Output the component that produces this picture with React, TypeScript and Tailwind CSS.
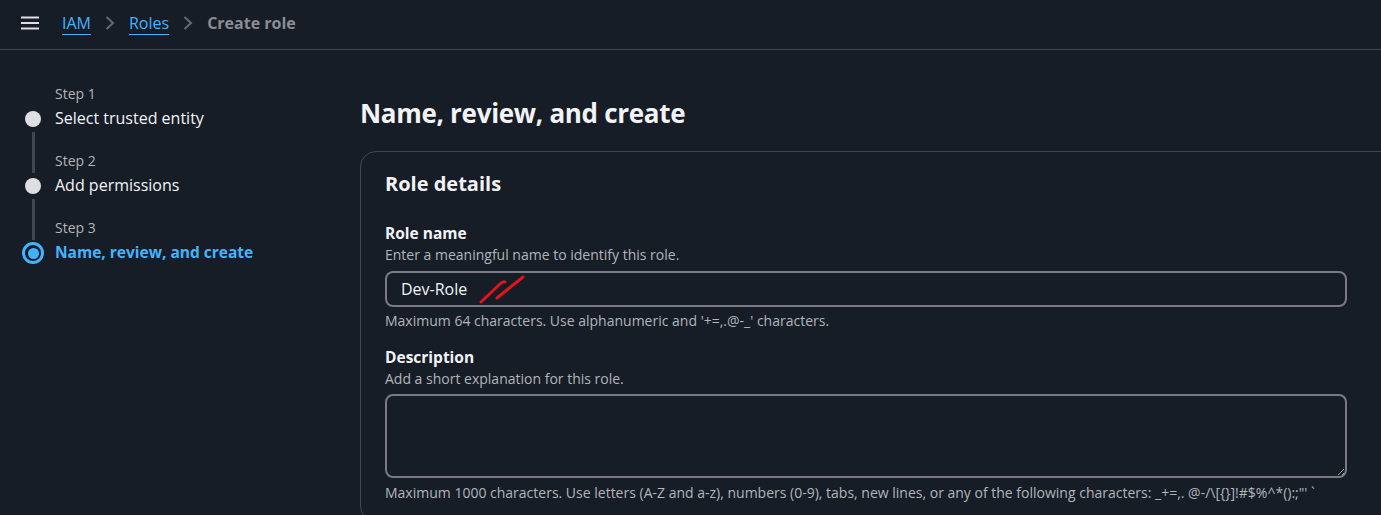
import React from "react";

const font = { fontFamily: '"Open Sans", "Noto Sans", Arial, sans-serif' };

function Chevron() {
  return (
    <svg width="12" height="16" viewBox="0 0 12 16" className="mx-[13px]" fill="none">
      <path d="M2.5 2 L9 8 L2.5 14" stroke="#656871" strokeWidth="2" />
    </svg>
  );
}

type Step = { label: string; title: string; active?: boolean };

const steps: Step[] = [
  { label: "Step 1", title: "Select trusted entity" },
  { label: "Step 2", title: "Add permissions" },
  { label: "Step 3", title: "Name, review, and create", active: true },
];

function StepItem({ step, first, last }: { step: Step; first: boolean; last: boolean }) {
  return (
    <div className="flex">
      <div className="flex w-[22px] flex-col items-center">
        <div className="flex h-[22px] w-full justify-center">
          {!first && <div className="mb-[2px] w-[3px] bg-[#424650]" />}
        </div>
        {step.active ? (
          <div className="flex h-[22px] w-[22px] items-center justify-center rounded-full border-[3px] border-[#42b4ff]">
            <div className="h-[11px] w-[11px] rounded-full bg-[#42b4ff]" />
          </div>
        ) : (
          <div className="my-[3px] h-[16px] w-[16px] rounded-full bg-[#dedee3]" />
        )}
        {!last && <div className="mt-[2px] w-[3px] flex-1 bg-[#424650]" />}
      </div>
      <div className={`ml-[11px] flex flex-col ${last ? "" : "pb-[25px]"}`}>
        <div className="text-[14px] leading-[16px] text-[#b4b4bb]">{step.label}</div>
        <div
          className={`mt-[6px] leading-[20px] ${
            step.active ? "text-[15.5px] font-bold text-[#42b4ff]" : "text-[16px] text-[#f3f3f7]"
          }`}
        >
          {step.title}
        </div>
      </div>
    </div>
  );
}

export default function App() {
  return (
    <div
      style={font}
      className="h-[515px] w-[1381px] overflow-hidden bg-[#161d26] text-[#dedee3]"
    >
      <header className="flex h-[50px] items-center border-b border-[#424650] pb-[4px] pl-[21px]">
        <svg width="18" height="14" viewBox="0 0 18 14" fill="none">
          <path d="M0 1.5H18M0 7H18M0 12.5H18" stroke="#dedee3" strokeWidth="2" />
        </svg>
        <div className="ml-[23px] flex items-center text-[16px] leading-[20px]">
          <span className="text-[#42b4ff] underline underline-offset-[5px]">IAM</span>
          <Chevron />
          <span className="text-[#42b4ff] underline underline-offset-[5px]">Roles</span>
          <Chevron />
          <span className="font-bold text-[#8c8c94]">Create role</span>
        </div>
      </header>
      <div className="flex">
        <nav className="w-[360px] shrink-0 pl-[22px] pt-[36px]">
          {steps.map((s, i) => (
            <StepItem key={s.label} step={s} first={i === 0} last={i === steps.length - 1} />
          ))}
        </nav>
        <main className="flex-1 pt-[45px]">
          <h1 className="text-[26px] font-bold leading-[36px] tracking-[-0.3px] text-[#f3f3f7]">
            Name, review, and create
          </h1>
          <section className="mt-[20px] w-[1060px] rounded-[16px] border border-[#424650] px-[24px] pt-[20px]">
            <h2 className="text-[20px] font-bold leading-[24px] text-[#f3f3f7]">Role details</h2>
            <div className="mt-[27px] text-[15.5px] font-bold leading-[20px] text-[#f3f3f7]">Role name</div>
            <div className="mt-[4px] text-[14px] leading-[16px] text-[#b4b4bb]">
              Enter a meaningful name to identify this role.
            </div>
            <div className="relative mt-[8px] w-[962px]">
              <div className="flex h-[36px] items-center rounded-[8px] border-2 border-[#7a7a84] px-[14px] text-[16px] text-[#f3f3f7]">
                Dev-Role
              </div>
              <svg
                className="absolute left-0 top-0"
                width="160"
                height="36"
                viewBox="0 0 160 36"
                fill="none"
              >
                <path d="M96 31 L115 13 Q118 10 120 11" stroke="#e0141c" strokeWidth="3" strokeLinecap="round" />
                <path d="M112 27 L138 6" stroke="#e0141c" strokeWidth="3" strokeLinecap="round" />
              </svg>
            </div>
            <div className="mt-[6px] text-[14px] leading-[16px] text-[#b4b4bb]">
              Maximum 64 characters. Use alphanumeric and '+=,.@-_' characters.
            </div>
            <div className="mt-[18px] text-[15.5px] font-bold leading-[20px] text-[#f3f3f7]">Description</div>
            <div className="mt-[4px] text-[14px] leading-[16px] text-[#b4b4bb]">
              Add a short explanation for this role.
            </div>
            <textarea
              className="mt-[7px] block h-[84px] w-[962px] rounded-[8px] border-2 border-[#7a7a84] bg-transparent [color-scheme:dark]"
              defaultValue=""
            />
            <div className="mt-[7px] whitespace-nowrap pb-[20px] text-[14px] leading-[16px] text-[#b4b4bb]">
              Maximum 1000 characters. Use letters (A-Z and a-z), numbers (0-9), tabs, new lines, or any of the following characters: _+=,. @-/\[{"{}"}]!#$%^*():;"' `
            </div>
          </section>
        </main>
      </div>
    </div>
  );
}
